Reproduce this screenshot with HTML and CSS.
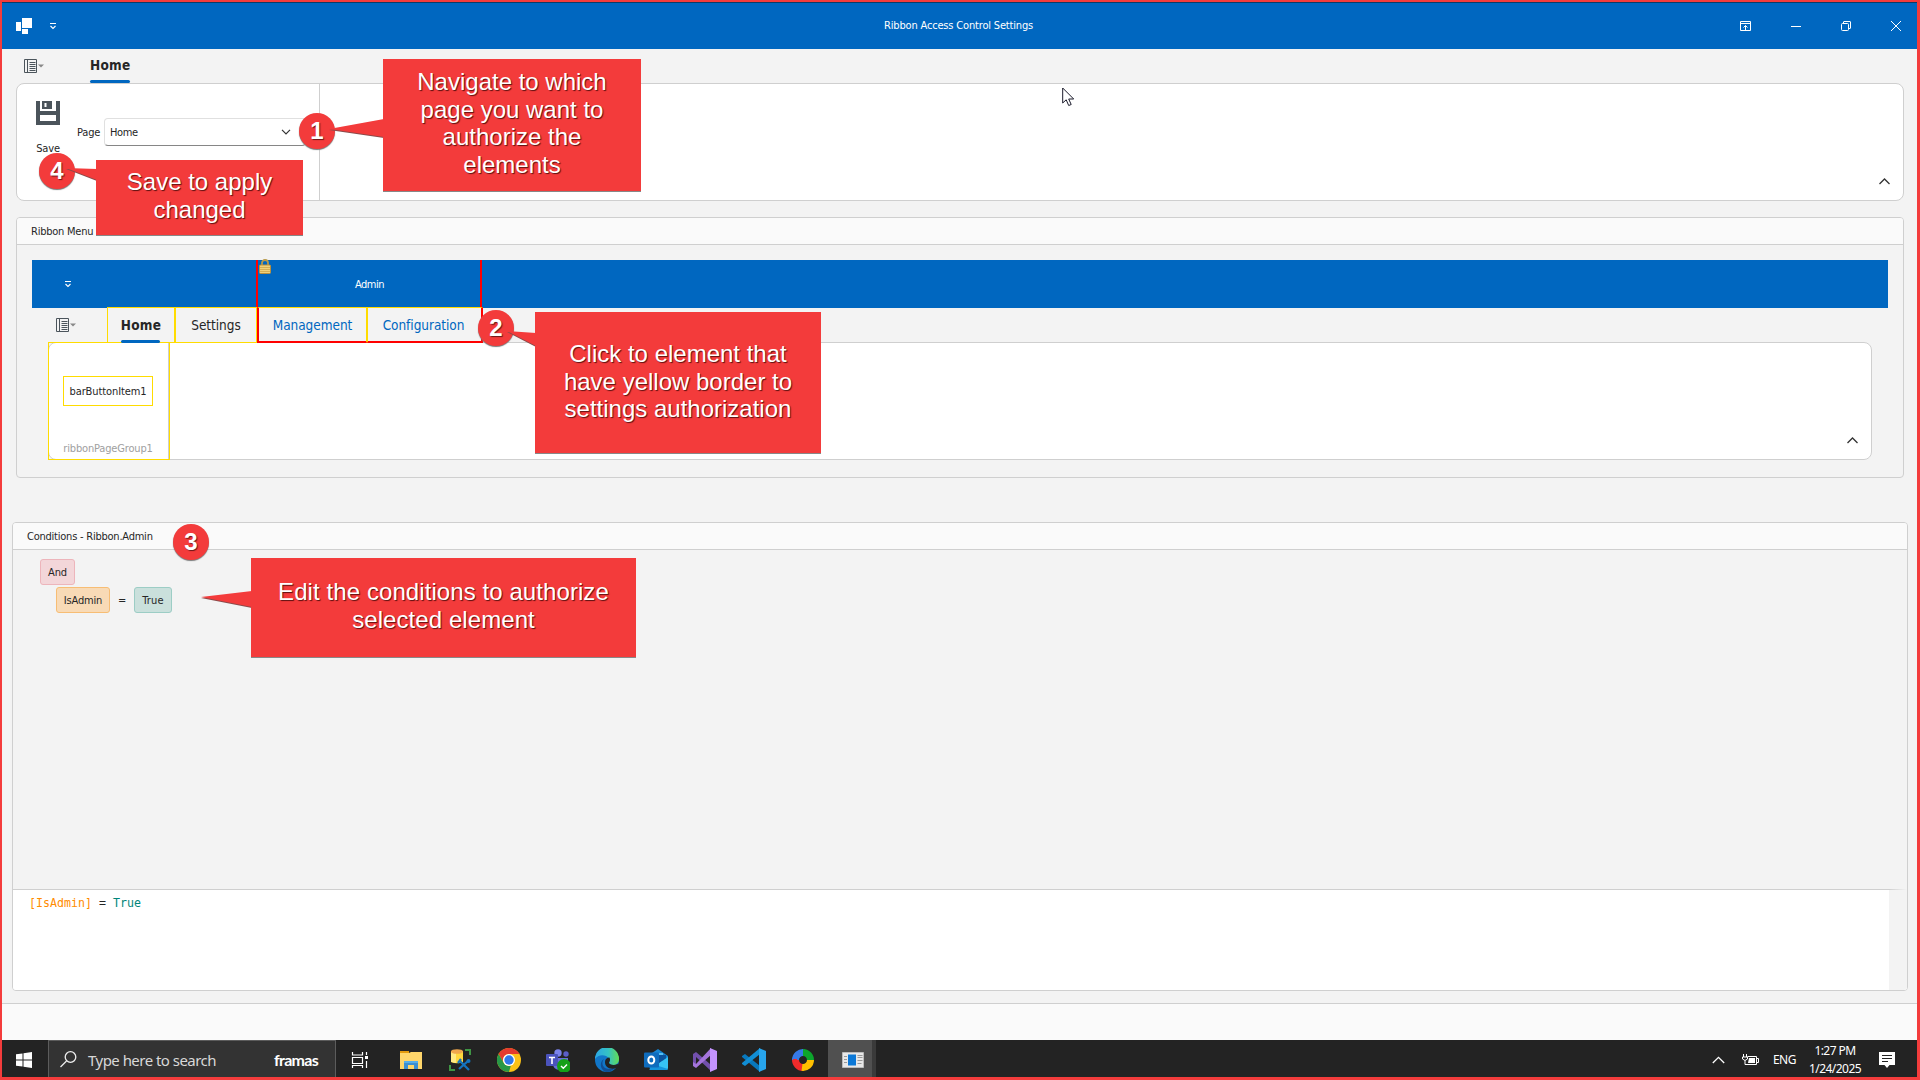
FILE: index.html
```html
<!DOCTYPE html>
<html lang="en">
<head>
<meta charset="utf-8">
<title>Ribbon Access Control Settings</title>
<link rel="stylesheet" href="styles.css">
</head>
<body>
<div class="screen">
  <header class="titlebar">
    <svg class="app-logo" width="16" height="16" viewBox="0 0 16 16" fill="#fff"><path d="M6 0h10v10H6zM0 4h5v9H0zM6 11h6v5H6z"/></svg>
    <svg class="qat" width="8" height="8" viewBox="0 0 8 8" fill="none" stroke="#fff" stroke-width="1.1"><path d="M1 1.500h6M1.500 4L4 6.500 6.500 4"/></svg>
    <span class="title">Ribbon Access Control Settings</span>
    <div class="window-buttons">
      <svg width="11" height="10" viewBox="0 0 11 10" fill="none" stroke="#fff"><path d="M.5.5h10v9H.5zM.5 2.500h10M5.500 9V4.500M3.500 6.500l2-2 2 2"/></svg>
      <svg width="10" height="10" viewBox="0 0 10 10" stroke="#fff"><path d="M0 5.500h10"/></svg>
      <svg width="10" height="10" viewBox="0 0 10 10" fill="none" stroke="#fff"><rect x=".5" y="2.500" width="7" height="7" rx="1"/><path d="M2.500 2V1q0-.5.5-.5h6q.5 0 .5.5v6q0 .5-.5.5H8"/></svg>
      <svg width="10" height="10" viewBox="0 0 10 10" stroke="#fff"><path d="M0 0l10 10M10 0L0 10"/></svg>
    </div>
  </header>

  <nav class="tabs main-tabs">
    <svg class="menu-icon" width="21" height="14" viewBox="0 0 21 14" fill="none" stroke="#4b545b"><path d="M.5.5h12v13H.5zM3.500.5v13M5.500 3.500h6M5.500 5.500h6M5.500 7.500h6M5.500 9.500h6M5.500 11.500h6"/><path d="M14 5.500h6l-3 3z" fill="#888" stroke="none"/></svg>
    <span class="tab active">Home</span>
  </nav>

  <section class="ribbon main-ribbon">
    <div class="group">
      <div class="save">
        <svg width="24" height="24" viewBox="0 0 24 24"><path fill="#4b545b" d="M0 0h4v10h16V0h4v24H0z"/><path fill="#4b545b" d="M6 0h10v8H6z"/><path fill="#fff" d="M8.500 2h2v4h-2zM4 14h16v6H4z"/></svg>
        <span>Save</span>
      </div>
      <span class="page-label">Page</span>
      <div class="combo"><span>Home</span>
        <svg width="10" height="6" viewBox="0 0 10 6" fill="none" stroke="#333" stroke-width="1.200"><path d="M1 .8l4 4 4-4"/></svg>
      </div>
    </div>
    <svg class="collapse" width="11" height="7" viewBox="0 0 11 7" fill="none" stroke="#333" stroke-width="1.300"><path d="M.5 6l5-5 5 5"/></svg>
  </section>

  <section class="panel menu-panel">
    <h2>Ribbon Menu</h2>
    <div class="preview">
      <div class="preview-title">
        <svg class="qat" width="8" height="8" viewBox="0 0 8 8" fill="none" stroke="#fff" stroke-width="1.100"><path d="M1 1.500h6M1.500 4L4 6.500 6.500 4"/></svg>
        <div class="category">
          <svg class="lock" width="12" height="16" viewBox="0 0 12 16"><path d="M3 8V4a3 3 0 0 1 6 0V8" fill="none" stroke="#b89a4a" stroke-width="1.800"/><rect x=".5" y="6" width="11" height="8.500" rx="1" fill="#f0d27a" stroke="#b98f3c"/><path d="M1 8.500h10M1 10.500h10M1 12.500h10" stroke="#cfa64a" stroke-width=".8"/></svg>
          <span>Admin</span>
        </div>
      </div>
      <nav class="tabs preview-tabs">
        <svg class="menu-icon" width="21" height="14" viewBox="0 0 21 14" fill="none" stroke="#4b545b"><path d="M.5.5h12v13H.5zM3.500.5v13M5.500 3.500h6M5.500 5.500h6M5.500 7.500h6M5.500 9.500h6M5.500 11.500h6"/><path d="M14 5.500h6l-3 3z" fill="#888" stroke="none"/></svg>
        <div class="slot home-slot"><span class="tab active">Home</span></div>
        <div class="slot settings-slot"><span class="tab">Settings</span></div>
        <div class="slot management-slot"><span class="tab">Management</span></div>
        <div class="slot configuration-slot"><span class="tab">Configuration</span></div>
      </nav>
      <div class="ribbon preview-ribbon">
        <div class="page-group">
          <div class="bar-button">barButtonItem1</div>
          <span class="group-name">ribbonPageGroup1</span>
        </div>
        <svg class="collapse" width="11" height="7" viewBox="0 0 11 7" fill="none" stroke="#333" stroke-width="1.300"><path d="M.5 6l5-5 5 5"/></svg>
      </div>
    </div>
  </section>

  <section class="panel conditions">
    <h2>Conditions - Ribbon.Admin</h2>
    <div class="tree">
      <div class="row"><span class="chip and">And</span></div>
      <div class="row child">
        <span class="chip field">IsAdmin</span><span class="equals">=</span><span class="chip value">True</span>
      </div>
    </div>
    <div class="expression"><code><span class="prop">[IsAdmin]</span> = <span class="const">True</span></code></div>
  </section>

  <div class="statusbar"></div>

  <footer class="taskbar">
    <div class="start"><svg width="16" height="16" viewBox="0 0 16 16" fill="#fff"><path d="M0 2.300L6.500 1.400v6.100H0zM7.500 1.200L16 0v7.500H7.500zM0 8.500h6.500v6.100L0 13.700zM7.500 8.500H16V16l-8.500-1.200z"/></svg></div>
    <div class="search">
      <svg width="17" height="17" viewBox="0 0 17 17" fill="none" stroke="#eee" stroke-width="1.300"><circle cx="10.500" cy="6" r="5.300"/><path d="M6.500 10L.5 16"/></svg>
      <span class="placeholder">Type here to search</span>
      <span class="brand">framas</span>
    </div>
    <div class="apps">
      <svg class="task-view" viewBox="0 0 24 24" fill="none" stroke="#fff" stroke-width="1.200"><path d="M4.500 4v3h10V4M4.500 9.500h10v6h-10zM4.500 20v-2.500h10V20M18.500 4v3M18.500 13v7"/><path d="M17 8h3v3h-3z" fill="#fff" stroke="none"/></svg>
      <svg viewBox="0 0 24 24"><path fill="#e49b0d" d="M1 3h9v5H1z"/><path fill="#ffd66b" d="M1 5h9l2-1h11v17H1z"/><path fill="#3d8fd0" d="M5 13h14v8h-4v-4H9v4H5z"/><path fill="#56aeea" d="M5 13h14v2H5z"/></svg>
      <svg viewBox="0 0 24 24"><path fill="#ffd83d" d="M3 3h12v11q-6 2.500-12 0z"/><path fill="#ffeb85" d="M3 4h5v11l-5-1z"/><ellipse cx="9" cy="3.500" rx="6" ry="2.300" fill="#f0a84d"/><path fill="none" stroke="#3f9544" stroke-width="2" d="M17 2h5v5M2 17v5h5"/><path fill="none" stroke="#1474bd" stroke-width="2.300" d="M11 21l9-8M11 12l10 10M10 15l3-4"/><circle cx="20.500" cy="13" r="2" fill="#1474bd"/></svg>
      <svg viewBox="0 0 24 24"><circle cx="12" cy="12" r="12" fill="#fbc116"/><path fill="#e33b2e" d="M1.600 6A12 12 0 0 1 22.400 6H12a6 6 0 0 0-5.200 9z"/><path fill="#279847" d="M1.600 6l5.200 9a6 6 0 0 0 7 2.700L12 24A12 12 0 0 1 1.600 6z"/><circle cx="12" cy="12" r="6" fill="#fff"/><circle cx="12" cy="12" r="4.700" fill="#2f78e8"/></svg>
      <svg viewBox="0 0 24 24"><circle cx="12" cy="5" r="3.700" fill="#7b83eb"/><circle cx="20" cy="6" r="2.700" fill="#5b5fc7"/><path fill="#6870d8" d="M7 10h15v7a6 6 0 0 1-6 5h-3q-6-1-6-6z"/><rect y="6" width="12" height="12" rx="1" fill="#4b53bc"/><path stroke="#fff" stroke-width="1.600" d="M3 9.500h6M6 9.500V16"/><circle cx="18" cy="18" r="7" fill="#15a017"/><path fill="none" stroke="#fff" stroke-width="1.400" d="M15 18l2.300 2.300L21 16.500"/></svg>
      <svg viewBox="0 0 24 24"><defs><linearGradient id="edge-top" x1="0" x2="1"><stop offset="0" stop-color="#2ba6e5"/><stop offset=".55" stop-color="#35c2c4"/><stop offset="1" stop-color="#63dc53"/></linearGradient></defs><circle cx="12" cy="12" r="12" fill="#1176c8"/><path fill="url(#edge-top)" d="M0 11a12 12 0 0 1 24 0c0 4-3 6-6 6s-5-1-4-2q1.500-2 0-4.500C11 6 3 6 0 11z"/><path fill="#114d93" d="M9 11c-4 5 0 11 7 10q3-.500 5-2.500A12 12 0 0 1 11 24c-6-2-7-10-2-13z"/><path fill="#232323" d="M14.500 9.500c1 2 .5 3.500-.500 5 0 2 5 3.500 8.500 1.500l1.500 1-2 3c-8 2-12-1-12-6 0-3 2-4.500 4.500-4.500z"/></svg>
      <svg viewBox="0 0 24 24"><path fill="#1685d3" d="M5 7l9-6 10 7v4H5z"/><path fill="#55bdf1" d="M10 5h9v11h-9z"/><path fill="#0b529c" d="M14 7h8v4l-8 5z"/><path fill="#36c3f4" d="M5 22L24 9v11q0 2-2 2z"/><path fill="#1594dc" d="M5 15l19 6-1 1H6z"/><rect y="4.500" width="15" height="15" rx="1" fill="#0f6cbd"/><ellipse cx="7.300" cy="12" rx="3" ry="3.500" fill="none" stroke="#fff" stroke-width="2"/></svg>
      <svg viewBox="0 0 24 24"><path fill="#7250ad" d="M0 6l3-2 14 12v6L3 9v7l-3 2z"/><path fill="#a575dc" d="M0 18l3 2L18 7V0L3 16l-3-2z"/><path fill="#c493ff" d="M17 0l7 3v18l-7 3z"/></svg>
      <svg viewBox="0 0 24 24"><path fill="#0878bd" d="M0 8l3-2 15 12v6L0 9z"/><path fill="#118ed5" d="M0 16l3 2L18 6V0L0 15z"/><path fill="#27a5ed" d="M17 0l7 3v18l-7 3z"/></svg>
      <svg viewBox="0 0 24 24" fill="none" stroke-width="7"><path stroke="#f12b2b" d="M12.500 19.500A7.500 7.500 0 0 1 4.600 11"/><path stroke="#367ae8" d="M4.500 12A7.500 7.500 0 0 1 13 4.600"/><path stroke="#0ca52c" d="M12 4.500a7.500 7.500 0 0 1 7.400 8.500"/><path stroke="#ffc000" d="M19.500 12a7.500 7.500 0 0 1-8.500 7.400"/><path stroke="#f12b2b" stroke-width="4" d="M8 17.500A7 7 0 0 1 4 11"/></svg>
      <div class="running"><svg width="22" height="16" viewBox="0 0 22 16"><path fill="#e8e8e8" stroke="#bbb" d="M.5.5h21v15H.5z"/><path fill="#0b78d7" d="M6 2.500h8v11H6z"/><path stroke="#999" d="M2 4.500h3M2 7.500h3M2 10.500h3M15.500 3.500h5M15.500 5.500h5M15.500 8.500h5M15.500 11.500h4"/></svg></div>
    </div>
    <div class="tray">
      <svg width="13" height="8" viewBox="0 0 13 8" fill="none" stroke="#fff" stroke-width="1.300"><path d="M.8 7l5.700-5.700L12.200 7"/></svg>
      <svg width="17" height="12" viewBox="0 0 17 12" fill="none" stroke="#fff"><path d="M5.500 2.500h9v8H4M14.500 4.500h2v4h-2M1.500 0v3M4.500 0v3M.5 3v2q2.500 3 5 0V3zM3 6.500v4h2"/><path fill="#fff" stroke="none" d="M7 4h6v5H6z"/></svg>
      <span class="lang">ENG</span>
      <div class="clock"><span>1:27 PM</span><span>1/24/2025</span></div>
      <svg width="16" height="16" viewBox="0 0 16 16"><path fill="#fff" d="M0 0h16v13h-5.500L8 16l-2.500-3H0z"/><path stroke="#232323" d="M3 3.500h10M3 6.500h10M3 9.500h6"/></svg>
    </div>
  </footer>
</div>

<div class="annotations">
  <span class="badge badge-1">1</span>
  <span class="badge badge-2">2</span>
  <span class="badge badge-3">3</span>
  <span class="badge badge-4">4</span>
  <svg class="tails" width="1920" height="1080" viewBox="0 0 1920 1080" fill="#f33b3b"><path d="M329 129l55-10v18zM66 168l31 1v11zM507 331l29 2v13zM201 597l51-6v16z"/></svg>
  <div class="callout callout-1">Navigate to which<br>page you want to<br>authorize the<br>elements</div>
  <div class="callout callout-4">Save to apply<br>changed</div>
  <div class="callout callout-2">Click to element that<br>have yellow border to<br>settings authorization</div>
  <div class="callout callout-3">Edit the conditions to authorize<br>selected element</div>
  <svg class="pointer" width="13" height="20" viewBox="0 0 13 20"><path d="M.7 1v15l3.500-3.200 2.500 5.700 2.500-1-2.500-5.500h5z" fill="#fff" stroke="#1b1b2b"/></svg>
</div>
</body>
</html>
```
FILE: styles.css
```css
* { box-sizing: border-box; }
body {
  margin: 0;
  width: 1920px;
  height: 1080px;
  overflow: hidden;
  position: relative;
  font: 11px/14px "DejaVu Sans Condensed", "DejaVu Sans", sans-serif;
  letter-spacing: -0.17px;
  color: #262626;
  background: #f3f3f3;
}
svg { display: block; flex: none; }
span { white-space: nowrap; }
h2 { margin: 0; font: inherit; }

.screen {
  width: 1920px;
  height: 1080px;
  border: solid #f43c3c;
  border-width: 2px 3px 3px 2px;
  display: flex;
  flex-direction: column;
}

/* title bar */
.titlebar {
  height: 47px;
  flex: none;
  border-top: 1px solid #0b3c68;
  background: #0067c0;
  color: #fff;
  display: flex;
  align-items: center;
  padding: 0 16px 0 14px;
}
.titlebar .qat { margin-left: 17px; }
.title { margin: 0 auto 0 827px; }
.window-buttons { display: flex; gap: 40px; }

/* tabs */
.tabs { display: flex; align-items: center; flex: none; }
.main-tabs { height: 34px; padding-left: 22px; }
.main-tabs .menu-icon { margin-top: -1px; }
.tab {
  font-size: 13.5px;
  line-height: 32px;
  height: 34px;
  letter-spacing: -0.05px;
  position: relative;
}
.tab.active { font-weight: bold; letter-spacing: 0.27px; }
.tab.active::after {
  content: "";
  position: absolute;
  left: 0;
  right: 1px;
  bottom: 0;
  height: 3px;
  border-radius: 2px;
  background: #0067c0;
}
.main-tabs .tab { margin-left: 45px; line-height: 33px; }

/* ribbon surfaces */
.ribbon {
  height: 118px;
  flex: none;
  background: #fff;
  border: 1px solid #cfcfcf;
  border-radius: 8px;
  display: flex;
  justify-content: space-between;
}
.main-ribbon { margin: 0 13px 0 14px; }
.group {
  width: 303px;
  border-right: 1px solid #cfcfcf;
  display: flex;
  align-items: flex-start;
  padding-left: 19px;
}
.save {
  width: 24px;
  padding-top: 17px;
  display: flex;
  flex-direction: column;
  align-items: center;
  gap: 17px;
}
.page-label { width: 24px; margin: 42px 3px 0 17px; }
.combo {
  width: 202px;
  height: 28px;
  margin-top: 34px;
  padding: 0 14px 0 5px;
  border: 1px solid #e0e0e0;
  border-bottom-color: #868686;
  border-radius: 4px;
  display: flex;
  align-items: center;
  justify-content: space-between;
}
.combo span { padding-top: 1px; letter-spacing: -0.4px; }
.collapse { align-self: flex-end; margin: 0 13px 15px 0; }

/* panels */
.panel {
  border: 1px solid #cfcfcf;
  border-radius: 4px;
  display: flex;
  flex-direction: column;
  overflow: hidden;
}
.panel h2 {
  height: 27px;
  flex: none;
  background: #fafafa;
  border-bottom: 1px solid #cfcfcf;
  padding: 7px 14px;
  letter-spacing: -0.23px;
}
.menu-panel { height: 261px; flex: none; margin: 16px 13px 0 14px; }
.preview { margin: 15px 15px 0 15px; }
.preview-title {
  height: 48px;
  background: #0067c0;
  color: #fff;
  display: flex;
  align-items: center;
  padding-left: 32px;
}
.category {
  width: 226px;
  height: 48px;
  margin-left: 184px;
  border: solid #f00;
  border-width: 0 2px;
  display: flex;
}
.lock { margin: -1px 0 0 1px; }
.category span { margin: 18px 0 0 84px; letter-spacing: -0.5px; }
.preview-tabs { height: 34px; padding-left: 24px; }
.slot {
  height: 36px;
  margin-top: -1px;
  border: 1px solid #ffdc00;
  display: flex;
  justify-content: center;
  padding-top: 1px;
  position: relative;
}
.home-slot { width: 68px; margin-left: 30px; }
.settings-slot { width: 82px; }
.management-slot { width: 110px; border-left: 2px solid #f00; }
.configuration-slot { width: 116px; border-right: 2px solid #f00; padding-right: 2px; }
.management-slot, .configuration-slot { color: #0067c0; border-bottom: 2px solid #f00; }
.preview-ribbon { margin: 0 16px; }
.page-group {
  width: 122px;
  height: 118px;
  margin: -1px;
  border: 1px solid #ffdc00;
  box-shadow: inset -1px 0 #cfcfcf;
  display: flex;
  flex-direction: column;
  align-items: center;
  padding: 33px 2px 0 0;
  gap: 36px;
}
.bar-button {
  width: 90px;
  height: 30px;
  border: 1px solid #ffdc00;
  display: flex;
  align-items: center;
  justify-content: center;
  padding-top: 1px;
  letter-spacing: -0.1px;
}
.group-name { color: #a0a0a0; }

/* condition editor */
.conditions { height: 469px; flex: none; margin: 44px 9px 0 10px; }
.tree { flex: 1; padding: 9px 27px; }
.row { display: flex; align-items: center; height: 26px; }
.child { margin: 2px 0 0 16px; }
.chip {
  height: 26px;
  border: 1px solid;
  border-radius: 3px;
  display: flex;
  align-items: center;
  justify-content: center;
  padding-top: 1px;
}
.and { width: 35px; background: #f3d6d9; border-color: #edb5bb; }
.field { width: 54px; background: #f8dab6; border-color: #f7bd74; }
.value { width: 38px; background: #cae0dc; border-color: #9ccdc5; letter-spacing: 0.2px; }
.equals { width: 24px; text-align: center; padding-top: 1px; }
.expression {
  height: 101px;
  flex: none;
  border-top: 1px solid #cfcfcf;
  border-right: 18px solid #f3f3f3;
  background: #fff;
  padding: 6px 16px;
}
code { font: 11.6px/14px "DejaVu Sans Mono", monospace; letter-spacing: 0.02px; white-space: pre; }
.prop { color: #ff8c00; }
.const { color: #00857a; }
.statusbar { height: 37px; flex: none; margin-top: 12px; background: #fafafa; border-top: 1px solid #cfcfcf; }

/* taskbar */
.taskbar { height: 37px; flex: none; display: flex; background: #232323; color: #fff; }
.start { width: 46px; padding: 12px 14px; }
.search {
  width: 288px;
  border: solid #5c5c5c;
  border-width: 1px 1px 0 1px;
  background: #333;
  display: flex;
  align-items: center;
  padding-left: 11px;
}
.placeholder { width: 128px; margin-left: 11px; padding-top: 2px; color: #d8d8d8; font: 15px/20px "Noto Sans", sans-serif; letter-spacing: -0.53px; }
.brand { margin-left: 58px; padding-top: 2px; font: bold 16px/20px Lato, sans-serif; letter-spacing: -0.7px; }
.apps { display: flex; align-items: center; gap: 25px; padding-left: 12px; }
.apps > svg { width: 24px; height: 24px; margin-top: 3px; }
.apps > .task-view { margin-right: 2px; }
.running {
  width: 48px;
  height: 37px;
  margin-left: -12px;
  padding: 12px 0 0 14px;
  background: #505050;
  border-right: 4px solid #3a3a3a;
}
.tray { margin-left: auto; display: flex; align-items: center; padding: 2px 22px 0 0; font: 12px/18px "Noto Sans", sans-serif; letter-spacing: -0.55px; }
.tray svg + svg { margin-left: 17px; }
.lang { width: 23px; margin-left: 14px; }
.clock { width: 52px; margin: 0 18px 0 13px; display: flex; flex-direction: column; align-items: center; }

/* annotations */
.badge, .callout, .tails, .pointer { position: absolute; letter-spacing: 0; }
.badge {
  width: 36px;
  height: 36px;
  border-radius: 50%;
  background: #f33b3b;
  color: #fff;
  font: bold 24px/36px "Liberation Sans", sans-serif;
  text-align: center;
  text-shadow: 1px 1px 1px #6b1717;
  box-shadow: 0 1px 1px #777;
}
.badge-1 { left: 299px; top: 113px; }
.badge-2 { left: 478px; top: 310px; }
.badge-3 { left: 173px; top: 524px; }
.badge-4 { left: 39px; top: 153px; }
.tails { left: 0; top: 0; filter: drop-shadow(0 1px 0 #8a4a4a); }
.callout {
  background: #f33b3b;
  color: #fff;
  font: 24px/27.7px "Liberation Sans", sans-serif;
  text-align: center;
  text-shadow: 1px 1px 1px #5a1010;
  box-shadow: 0 1px 0 #888;
}
.callout-1 { left: 383px; top: 59px; width: 258px; height: 132px; padding-top: 9px; }
.callout-4 { left: 96px; top: 160px; width: 207px; height: 75px; padding-top: 8px; }
.callout-2 { left: 535px; top: 312px; width: 286px; height: 141px; padding-top: 28px; }
.callout-3 { left: 251px; top: 558px; width: 385px; height: 99px; padding-top: 20px; letter-spacing: 0.08px; }
.pointer { left: 1062px; top: 87px; }
```
